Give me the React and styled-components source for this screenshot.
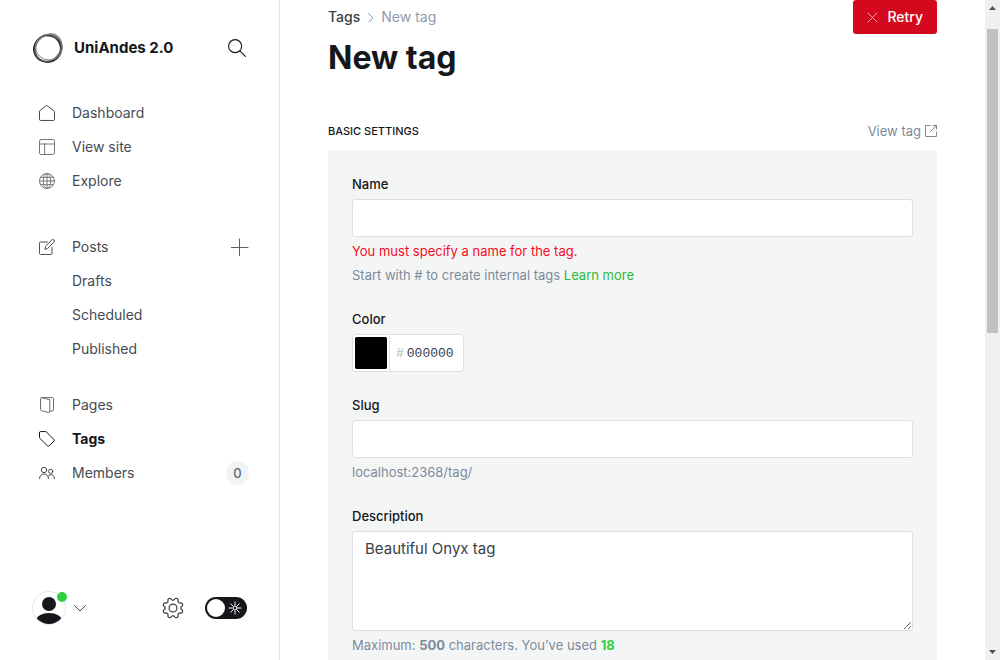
import React, { useState } from "react";
import styled, { createGlobalStyle } from "styled-components";

const GlobalStyle = createGlobalStyle`
  *, *::before, *::after { box-sizing: border-box; }
  body {
    margin: 0;
    background: #fff;
    color: #15171a;
    font-family: Inter, "Open Sans", sans-serif;
    font-size: 15px;
    overflow: hidden;
  }
  button, input, textarea { font: inherit; color: inherit; }
  button { border: 0; padding: 0; background: none; cursor: pointer; }
  a { color: inherit; text-decoration: none; }
  h1, h2, p, ul { margin: 0; padding: 0; }
  ul { list-style: none; }
`;

const Page = styled.div`
  display: flex;
  height: 100vh;
`;

/* Sidebar */

const Sidebar = styled.aside`
  display: flex;
  flex: 0 0 280px;
  flex-direction: column;
  border-right: 1px solid #e1e1e1;
`;

const SiteHeader = styled.header`
  display: flex;
  align-items: center;
  height: 96px;
  padding: 0 33px 0 32px;
`;

const SiteName = styled.strong`
  flex: 1;
  margin-left: 10px;
  font-size: 15px;
  font-weight: 700;
  line-height: 20px;
`;

const IconButton = styled.button`
  display: grid;
  place-items: center;
  color: ${(p) => p.$color || "#15171a"};
`;

const Nav = styled.nav`
  display: flex;
  flex: 1;
  flex-direction: column;
`;

const NavList = styled.ul`
  margin-bottom: ${(p) => p.$gap || 0}px;
`;

const NavItem = styled.li`
  display: flex;
  align-items: center;
  height: 34px;
  padding: 0 30px 0 39px;
`;

const NavLink = styled.a`
  display: flex;
  flex: 1;
  align-items: center;
  gap: 17px;
  padding-left: ${(p) => (p.$nested ? 33 : 0)}px;
  color: ${(p) => (p.$active ? "#15171a" : "#454c54")};
  font-size: 14px;
  font-weight: ${(p) => (p.$active ? 700 : 400)};
  line-height: 18px;
`;

const Count = styled.span`
  display: grid;
  place-items: center;
  min-width: 23px;
  height: 24px;
  border-radius: 12px;
  background: #f1f3f4;
  color: #5d6771;
  font-size: 13px;
  font-weight: 500;
`;

const SidebarFooter = styled.footer`
  display: flex;
  align-items: center;
  height: 104px;
  padding: 0 32px;
`;

const UserButton = styled.button`
  display: flex;
  align-items: center;
  gap: 8px;
  margin-right: auto;
  color: #394047;
`;

const Avatar = styled.span`
  position: relative;
  display: block;
  width: 34px;
  height: 34px;
`;

const OnlineDot = styled.span`
  position: absolute;
  top: 1px;
  right: -1px;
  width: 10px;
  height: 10px;
  border-radius: 50%;
  background: #30cf43;
`;

const ThemeSwitch = styled.label`
  display: flex;
  align-items: center;
  justify-content: space-between;
  width: 42px;
  height: 22px;
  margin-left: 21px;
  padding: 0 5px 0 2px;
  border-radius: 11px;
  background: #15171a;
  color: #fff;
  cursor: pointer;
`;

const SwitchInput = styled.input`
  appearance: none;
  width: 18px;
  height: 18px;
  margin: 0;
  border-radius: 50%;
  background: #fff;
`;

/* Main area */

const Main = styled.main`
  flex: 1;
  min-width: 0;
  padding: 0 48px;
  overflow: hidden;
`;

const TopBar = styled.div`
  display: flex;
  align-items: center;
  justify-content: space-between;
  height: 34px;
`;

const Breadcrumb = styled.nav`
  display: flex;
  align-items: center;
  gap: 6px;
  color: #8e9cac;
  font-size: 14px;
  line-height: 18px;
`;

const CrumbLink = styled.a`
  color: #394047;
  font-weight: 500;
`;

const RetryButton = styled.button`
  display: flex;
  align-items: center;
  gap: 9px;
  height: 34px;
  padding: 0 14px;
  border-radius: 3px;
  background: #d5091e;
  color: #fff;
  font-size: 14px;
  font-weight: 500;
  line-height: 18px;
`;

const Title = styled.h1`
  height: 80px;
  padding-top: 4px;
  font-size: 32px;
  font-weight: 700;
  line-height: 40px;
`;

const SectionHeader = styled.div`
  display: flex;
  align-items: center;
  justify-content: space-between;
  height: 36px;
  padding-bottom: 2px;
`;

const SectionTitle = styled.h2`
  font-size: 11px;
  font-weight: 500;
  text-transform: uppercase;
`;

const ViewLink = styled.a`
  display: flex;
  align-items: center;
  gap: 4px;
  color: #7c8b9a;
  font-size: 13px;
`;

const Panel = styled.form`
  display: flex;
  flex-direction: column;
  gap: 23px;
  padding: 24px;
  border-radius: 3px;
  background: #f4f6f6;
`;

const Field = styled.div`
  display: flex;
  flex-direction: column;
`;

const Label = styled.label`
  margin-bottom: 5px;
  font-size: 13px;
  font-weight: 500;
  line-height: 20px;
`;

const TextInput = styled.input`
  width: 100%;
  height: 38px;
  padding: 0 12px;
  border: 1px solid #dddfe0;
  border-radius: 3px;
  background: #fff;
  outline: 0;
`;

const TextArea = styled.textarea`
  display: block;
  width: 100%;
  height: 100px;
  padding: 7px 12px;
  border: 1px solid #dddfe0;
  border-radius: 3px;
  background: #fff;
  color: #394047;
  font-size: 15px;
  line-height: 20px;
  outline: 0;
  resize: vertical;
`;

const ErrorText = styled.p`
  margin-top: 4px;
  color: #f50b23;
  font-size: 13px;
  line-height: 20px;
`;

const Hint = styled.p`
  margin-top: 4px;
  color: #7c8b9a;
  font-size: 13px;
  line-height: 21px;
`;

const HelpLink = styled.a`
  color: #2bba3c;
`;

const Used = styled.strong`
  color: #30cf43;
`;

const ColorBox = styled.div`
  display: flex;
  align-items: center;
  align-self: flex-start;
  width: 112px;
  height: 38px;
  border: 1px solid #dddfe0;
  border-radius: 3px;
  background: #fff;
`;

const SwatchWrap = styled.div`
  display: grid;
  place-items: center;
  width: 37px;
  height: 36px;
  border-right: 1px solid #dddfe0;
`;

const Swatch = styled.input`
  appearance: none;
  width: 32px;
  height: 32px;
  padding: 0;
  border: 0;
  border-radius: 2px;
  background: #000;
  &::-webkit-color-swatch-wrapper { padding: 0; }
  &::-webkit-color-swatch { border: 0; border-radius: 2px; }
`;

const Hash = styled.span`
  margin: 0 3px 0 6px;
  color: #abb4be;
  font-family: "Liberation Mono", monospace;
  font-size: 13px;
`;

const HexInput = styled.input`
  flex: 1;
  min-width: 0;
  padding: 0;
  border: 0;
  background: none;
  color: #394047;
  font-family: "Liberation Mono", monospace;
  font-size: 13px;
  outline: 0;
`;

const Scrollbar = styled.div`
  display: flex;
  flex: 0 0 15px;
  flex-direction: column;
  align-items: center;
  justify-content: space-between;
  padding: 5px 0;
  background: #f0f0f0;
`;

const ScrollTrack = styled.div`
  flex: 1;
  width: 11px;
  padding: 17px 0 12px;
`;

const ScrollThumb = styled.div`
  height: 50%;
  background: #c1c1c1;
`;

const Arrow = ({ down }) => (
  <svg width="7" height="7" viewBox="0 0 7 7" fill="#505050">
    <path d={down ? "M0 2h7L3.5 6z" : "M0 5h7L3.5 1z"} />
  </svg>
);

/* Icons */

const Icon = ({ size = 16, width = 1.5, box = 24, children }) => (
  <svg
    width={size}
    height={size}
    viewBox={`0 0 ${box} ${box}`}
    fill="none"
    stroke="currentColor"
    strokeWidth={width}
    strokeLinecap="round"
    strokeLinejoin="round"
    aria-hidden="true"
  >
    {children}
  </svg>
);

const icons = {
  home: <path d="M.75 9.5V21.7c0 .8.6 1.500 1.500 1.500h19.500c.9 0 1.500-.7 1.500-1.500V9.500L12 .75z" />,
  site: (
    <g opacity=".75">
      <rect x=".75" y=".75" width="22.5" height="22.5" rx="2.5" />
      <path d="M.75 7.5h22.5M8.5 7.5v15.7" />
    </g>
  ),
  globe: (
    <g opacity=".75">
      <circle cx="12" cy="12" r="11.25" />
      <ellipse cx="12" cy="12" rx="5.6" ry="11.25" />
      <path d="M12 .75v22.5M.75 12h22.5M2.5 6.500h19M2.5 17.500h19" />
    </g>
  ),
  posts: (
    <>
      <path d="M12.7 4.5H2.2c-.8 0-1.5.7-1.5 1.5v15.7c0 .9.7 1.5 1.5 1.5H18c.8 0 1.5-.6 1.5-1.5V12.5" />
      <path d="M9 15l1-4.3 9.2-9.2a2.2 2.2 0 013.2 3.2L13.2 14z" />
    </>
  ),
  pages: (
    <g opacity=".8">
      <path d="M15.7 4L4 .9c-1-.2-1.7.3-1.7 1.3v16.5c0 .8.5 1.5 1.3 1.7l10.8 2.8c1 .3 1.8-.3 1.8-1.3V4.8c0-.4-.2-.7-.5-.8z" />
      <path d="M4 .9h16.2c.9 0 1.5.6 1.5 1.5v17.1c0 .9-.6 1.5-1.5 1.5h-4" />
    </g>
  ),
  tag: <path d="M.75 2.2v7c0 .8.3 1.5.9 2.1l11.2 11.2c.6.6 1.5.6 2.1 0l7.6-7.6c.6-.6.6-1.5 0-2.1L11.3 1.6c-.6-.5-1.3-.8-2.1-.8h-7C1.4.8.75 1.4.75 2.2z" />,
  members: (
    <>
      <circle cx="7.5" cy="7.5" r="4" />
      <circle cx="17.5" cy="9.5" r="3.2" />
      <path d="M.75 20.2a6.75 6.75 0 0113.5 0M14 16.2a5.3 5.3 0 019.25 4" />
    </>
  ),
};

const Logo = () => (
  <svg width="32" height="32" viewBox="0 0 32 32" fill="none" stroke="#222" aria-hidden="true">
    <path
      d="M20 1.500c6 1.500 10.500 6.500 10.500 13.500 0 8-6 14.500-13 15.500 6-2.500 10.500-8 10.500-15C28 9 24 3.500 20 1.500z"
      fill="#888"
      stroke="none"
      opacity=".7"
    />
    <circle cx="16" cy="16.500" r="13.500" stroke="#444" strokeWidth="1.500" />
    <ellipse cx="15" cy="17" rx="13.500" ry="13" strokeWidth="1" transform="rotate(-25 15 17)" />
    <ellipse cx="16.500" cy="15.500" rx="14.500" ry="12" stroke="#666" strokeWidth="1" transform="rotate(-52 16.500 15.500)" />
    <ellipse cx="17" cy="15" rx="13.500" ry="13" stroke="#888" strokeWidth="1" />
  </svg>
);

const AvatarArt = () => (
  <svg width="34" height="34" viewBox="0 0 34 34" aria-hidden="true">
    <defs>
      <clipPath id="avatar-clip">
        <circle cx="17" cy="17" r="16" />
      </clipPath>
    </defs>
    <circle cx="17" cy="17" r="16.5" fill="#fff" stroke="#e5e7e9" />
    <g fill="#15171a" clipPath="url(#avatar-clip)">
      <circle cx="17" cy="13" r="7" />
      <ellipse cx="17" cy="30" rx="13" ry="8" />
    </g>
  </svg>
);

const gearPath = (() => {
  const points = [];
  const steps = 96;
  for (let i = 0; i < steps; i += 1) {
    const a = (i / steps) * Math.PI * 2;
    const wave = Math.tanh(2.2 * Math.cos(8 * a + Math.PI));
    const r = 9.9 + 1.3 * wave;
    points.push(`${(12 + r * Math.cos(a)).toFixed(2)} ${(12 + r * Math.sin(a)).toFixed(2)}`);
  }
  return `M${points.join("L")}z`;
})();

const mainLinks = [
  ["home", "Dashboard"],
  ["site", "View site"],
  ["globe", "Explore"],
];

export default function App() {
  const [name, setName] = useState("");
  const [slug, setSlug] = useState("");
  const [hex, setHex] = useState("000000");
  const [description, setDescription] = useState("Beautiful Onyx tag");

  return (
    <>
      <GlobalStyle />
      <Page>
        <Sidebar>
          <SiteHeader>
            <Logo />
            <SiteName>UniAndes 2.0</SiteName>
            <IconButton type="button" aria-label="Search">
              <Icon size={18} width={1.5}>
                <circle cx="9.5" cy="9.5" r="8.7" />
                <path d="M15.8 15.8l7.400 7.400" />
              </Icon>
            </IconButton>
          </SiteHeader>
          <Nav>
            <NavList $gap={32}>
              {mainLinks.map(([icon, text]) => (
                <NavItem key={text}>
                  <NavLink href="#">
                    <Icon>{icons[icon]}</Icon>
                    {text}
                  </NavLink>
                </NavItem>
              ))}
            </NavList>
            <NavList $gap={22}>
              <NavItem>
                <NavLink href="#">
                  <Icon>{icons.posts}</Icon>
                  Posts
                </NavLink>
                <IconButton type="button" aria-label="New post" $color="#5c636b">
                  <Icon size={18} box={18} width={1}>
                    <path d="M8.5 1v17M0 9.5h17" />
                  </Icon>
                </IconButton>
              </NavItem>
              {["Drafts", "Scheduled", "Published"].map((text) => (
                <NavItem key={text}>
                  <NavLink href="#" $nested>{text}</NavLink>
                </NavItem>
              ))}
            </NavList>
            <NavList>
              <NavItem>
                <NavLink href="#">
                  <Icon>{icons.pages}</Icon>
                  Pages
                </NavLink>
              </NavItem>
              <NavItem>
                <NavLink href="#" $active aria-current="page">
                  <Icon>{icons.tag}</Icon>
                  Tags
                </NavLink>
              </NavItem>
              <NavItem>
                <NavLink href="#">
                  <Icon>{icons.members}</Icon>
                  Members
                </NavLink>
                <Count>0</Count>
              </NavItem>
            </NavList>
          </Nav>
          <SidebarFooter>
            <UserButton type="button" aria-label="User menu">
              <Avatar>
                <AvatarArt />
                <OnlineDot />
              </Avatar>
              <Icon size={12} box={12} width={1}>
                <path d="M.5 3.5L6 9l5.5-5.5" />
              </Icon>
            </UserButton>
            <IconButton type="button" aria-label="Settings" $color="#394047">
              <Icon size={22} width={1.3}>
                <path d={gearPath} />
                <circle cx="12" cy="12" r="4.3" />
              </Icon>
            </IconButton>
            <ThemeSwitch>
              <SwitchInput type="checkbox" aria-label="Dark mode" />
              <Icon size={14} box={14} width={1}>
                <circle cx="7" cy="7" r="2" />
                <path d="M7 1v3M7 10v3M1 7h3M10 7h3M2.8 2.8l2 2M9.2 9.2l2 2M2.8 11.2l2-2M9.2 4.8l2-2" />
              </Icon>
            </ThemeSwitch>
          </SidebarFooter>
        </Sidebar>

        <Main>
          <TopBar>
            <Breadcrumb aria-label="Breadcrumb">
              <CrumbLink href="#">Tags</CrumbLink>
              <Icon size={9} box={9} width={1}>
                <path d="M2.500 .5l4.500 4.500-4.500 4" />
              </Icon>
              <span>New tag</span>
            </Breadcrumb>
            <RetryButton type="button">
              <Icon size={11} box={11} width={1}>
                <path d="M1 1l9 9M10 1l-9 9" opacity=".6" />
              </Icon>
              Retry
            </RetryButton>
          </TopBar>
          <Title>New tag</Title>
          <SectionHeader>
            <SectionTitle>Basic settings</SectionTitle>
            <ViewLink href="#">
              View tag
              <Icon size={12} box={12} width={1}>
                <path d="M5 .5H.5v11h11V7M8 .5h3.5V4M11.5 .5L5 7" />
              </Icon>
            </ViewLink>
          </SectionHeader>
          <Panel onSubmit={(e) => e.preventDefault()}>
            <Field>
              <Label htmlFor="tag-name">Name</Label>
              <TextInput id="tag-name" value={name} onChange={(e) => setName(e.target.value)} />
              <ErrorText>You must specify a name for the tag.</ErrorText>
              <Hint>
                Start with # to create internal tags <HelpLink href="#">Learn more</HelpLink>
              </Hint>
            </Field>
            <Field>
              <Label htmlFor="tag-color">Color</Label>
              <ColorBox>
                <SwatchWrap>
                  <Swatch
                    type="color"
                    aria-label="Pick a color"
                    value={/^[0-9a-f]{6}$/i.test(hex) ? `#${hex}` : "#000000"}
                    onChange={(e) => setHex(e.target.value.slice(1))}
                  />
                </SwatchWrap>
                <Hash>#</Hash>
                <HexInput id="tag-color" maxLength={6} value={hex} onChange={(e) => setHex(e.target.value)} />
              </ColorBox>
            </Field>
            <Field>
              <Label htmlFor="tag-slug">Slug</Label>
              <TextInput id="tag-slug" value={slug} onChange={(e) => setSlug(e.target.value)} />
              <Hint>localhost:2368/tag/{slug}</Hint>
            </Field>
            <Field>
              <Label htmlFor="tag-description">Description</Label>
              <TextArea
                id="tag-description"
                value={description}
                onChange={(e) => setDescription(e.target.value)}
              />
              <Hint>
                Maximum: <strong>500</strong> characters. You’ve used <Used>{description.length}</Used>
              </Hint>
            </Field>
          </Panel>
        </Main>

        <Scrollbar aria-hidden="true">
          <Arrow />
          <ScrollTrack>
            <ScrollThumb />
          </ScrollTrack>
          <Arrow down />
        </Scrollbar>
      </Page>
    </>
  );
}
